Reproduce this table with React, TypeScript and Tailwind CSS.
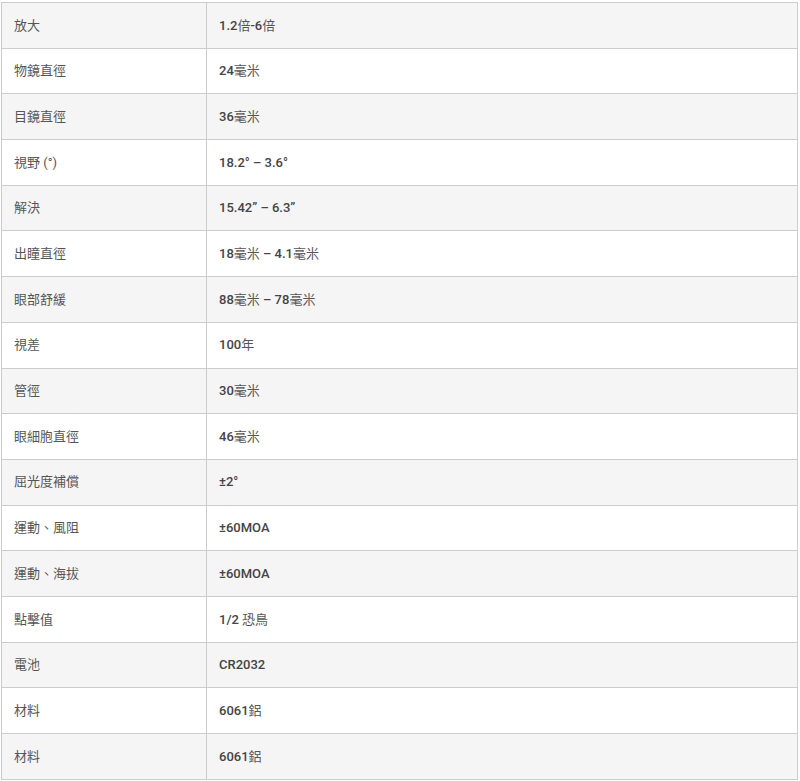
import React from "react";

const specs: [string, string][] = [
  ["放大", "1.2倍-6倍"],
  ["物鏡直徑", "24毫米"],
  ["目鏡直徑", "36毫米"],
  ["視野 (°)", "18.2° – 3.6°"],
  ["解決", "15.42” – 6.3”"],
  ["出瞳直徑", "18毫米 – 4.1毫米"],
  ["眼部舒緩", "88毫米 – 78毫米"],
  ["視差", "100年"],
  ["管徑", "30毫米"],
  ["眼細胞直徑", "46毫米"],
  ["屈光度補償", "±2°"],
  ["運動、風阻", "±60MOA"],
  ["運動、海拔", "±60MOA"],
  ["點擊值", "1/2 恐鳥"],
  ["電池", "CR2032"],
  ["材料", "6061鋁"],
  ["材料", "6061鋁"],
];

// digits / latin show heavier, CJK glyphs stay regular
const ValueText: React.FC<{ text: string }> = ({ text }) => {
  const parts = text.split(/([\u3000-\u9fff、]+)/).filter(Boolean);
  return (
    <>
      {parts.map((p, i) =>
        /[\u3000-\u9fff]/.test(p) ? (
          <span key={i} className="font-normal text-[#555]">{p}</span>
        ) : (
          <span key={i}>{p}</span>
        )
      )}
    </>
  );
};

export default function App() {
  return (
    <div className="bg-white pt-[2px] pl-[1px] min-h-[781px]">
      <table
        className="w-[797px] border-collapse text-[13px]"
        style={{ fontFamily: 'Roboto, "Noto Sans CJK TC", sans-serif' }}
      >
        <tbody>
          {specs.map(([label, value], i) => (
            <tr key={i} className={`h-[45.7px] ${i % 2 === 0 ? "bg-[#f5f5f5]" : "bg-white"}`}>
              <td className="w-[205px] border border-[#cccccc] pl-[12px] align-middle text-[#555555]">
                {label}
              </td>
              <td className="border border-[#cccccc] pl-[12px] align-middle font-medium text-[#444444]">
                <ValueText text={value} />
              </td>
            </tr>
          ))}
        </tbody>
      </table>
    </div>
  );
}
